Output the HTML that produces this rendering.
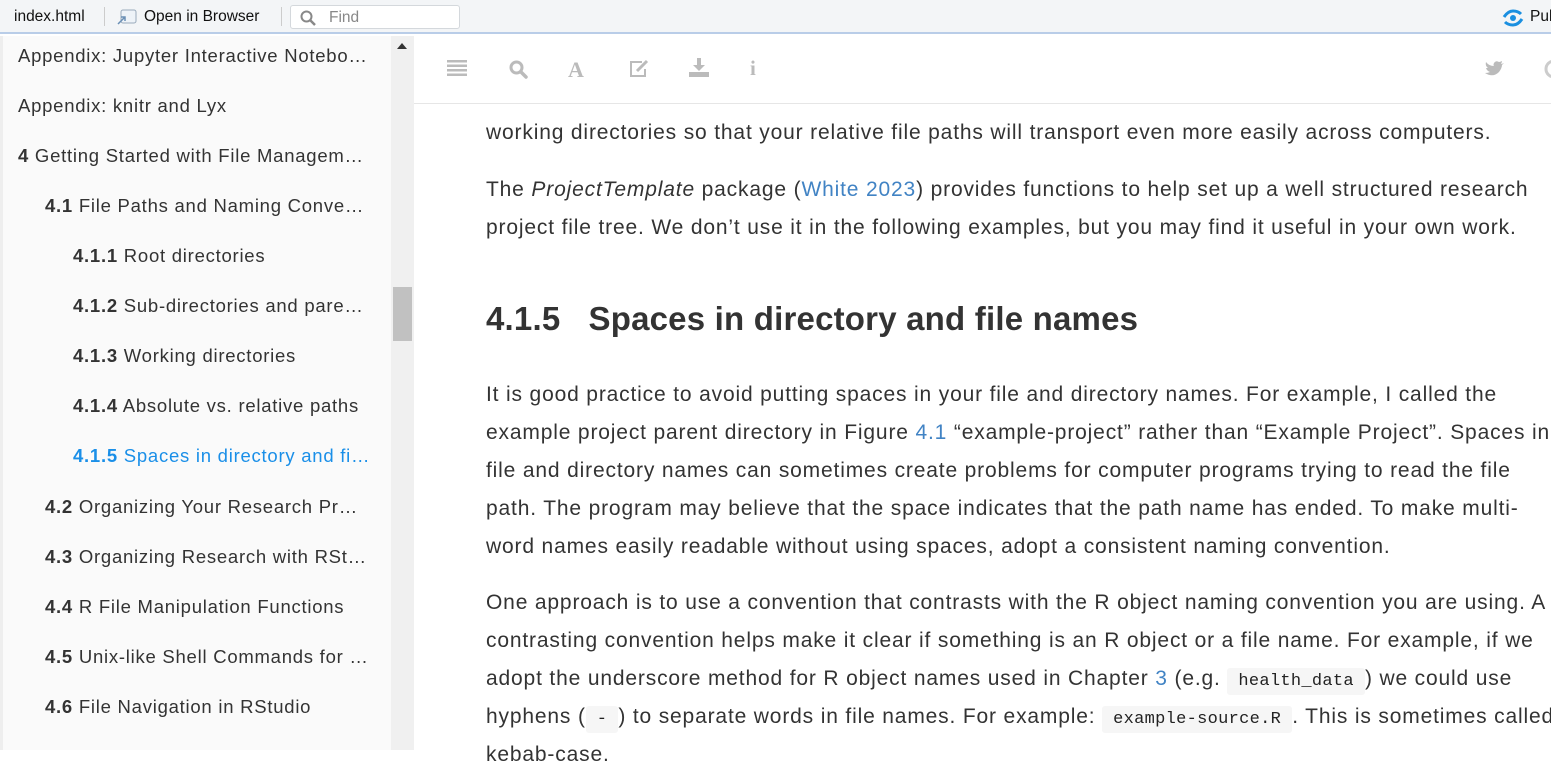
<!DOCTYPE html>
<html><head><meta charset="utf-8"><style>
*{margin:0;padding:0;box-sizing:border-box}
body{width:1551px;height:750px;overflow:hidden;background:#fff;font-family:"Liberation Sans",Arial,sans-serif;position:relative}
#top{position:absolute;left:0;top:0;width:1551px;height:34px;background:#f3f5f7;border-bottom:2px solid #b9cde8;font-size:15.5px;color:#111}
#top span{position:absolute;top:8px}
.sep{position:absolute;top:7px;width:1px;height:19px;background:#ccc}
#find{position:absolute;left:290px;top:5px;width:170px;height:24px;border:1px solid #d4d8dc;border-radius:3px;background:#fff}
#side{position:absolute;left:0;top:36px;width:391px;height:714px;background:#fafafa;border-left:3px solid #eee}
#side div{position:absolute;font-size:18.5px;color:#333;white-space:nowrap;letter-spacing:0.75px}
#side b{font-weight:bold}
#sb{position:absolute;left:391px;top:36px;width:23px;height:714px;background:#f0f0f0}
#thumb{position:absolute;left:393px;top:287px;width:19px;height:54px;background:#c1c1c1}
#tool{position:absolute;left:414px;top:36px;width:1137px;height:68px;border-bottom:1px solid #e6e6e6;background:#fff}
.p{position:absolute;left:486px;font-size:21px;color:#333;white-space:nowrap;letter-spacing:0.84px}
a{color:#4183c4;text-decoration:none}
code{font-family:"Liberation Mono",monospace;font-size:17px;letter-spacing:0.3px;background:#f6f6f6;padding:4px 11px;border-radius:3px;color:#222}
h2{position:absolute;left:486px;top:300px;font-size:33px;letter-spacing:0.2px;font-weight:bold;color:#333;white-space:nowrap}
</style></head><body>
<div id="top">
<span style="left:14px">index.html</span>
<div class="sep" style="left:104px"></div>
<svg style="position:absolute;left:116px;top:9px" width="22" height="17"><rect x="5" y="1" width="15" height="13" rx="2" fill="#eef3f8" stroke="#9ab" /><path d="M2 15 L9 8 M5 8 H9 V12" stroke="#6a8fb5" fill="none" stroke-width="1.5"/></svg>
<span style="left:144px">Open in Browser</span>
<div class="sep" style="left:281px"></div>
<div id="find"><svg style="position:absolute;left:9px;top:4px" width="16" height="16"><circle cx="6.5" cy="6.5" r="5" stroke="#888" stroke-width="2" fill="none"/><path d="M10 10 L15 15" stroke="#888" stroke-width="2.5"/></svg><span style="left:38px;top:3px;color:#888">Find</span></div>
<svg style="position:absolute;left:1502px;top:8px" width="22" height="20"><path d="M2 9 Q6 3 11 3 Q16 3 19 6" stroke="#1a8fe0" stroke-width="3" fill="none"/><path d="M20 11 Q16 17 11 17 Q6 17 3 14" stroke="#1a8fe0" stroke-width="3" fill="none"/><circle cx="11" cy="10" r="3" fill="#1a8fe0"/></svg>
<span style="left:1530px">Pul</span>
</div>
<div id="side">
<div style="left:15px;top:9px">Appendix: Jupyter Interactive Notebo…</div>
<div style="left:15px;top:59px">Appendix: knitr and Lyx</div>
<div style="left:15px;top:109px"><b>4</b> Getting Started with File Managem…</div>
<div style="left:42px;top:159px"><b>4.1</b> File Paths and Naming Conve…</div>
<div style="left:70px;top:209px"><b>4.1.1</b> Root directories</div>
<div style="left:70px;top:259px"><b>4.1.2</b> Sub-directories and pare…</div>
<div style="left:70px;top:309px"><b>4.1.3</b> Working directories</div>
<div style="left:70px;top:359px"><b>4.1.4</b> Absolute vs. relative paths</div>
<div style="left:70px;top:409px;color:#1a8fe8"><b>4.1.5</b> Spaces in directory and fi…</div>
<div style="left:42px;top:460px"><b>4.2</b> Organizing Your Research Pr…</div>
<div style="left:42px;top:510px"><b>4.3</b> Organizing Research with RSt…</div>
<div style="left:42px;top:560px"><b>4.4</b> R File Manipulation Functions</div>
<div style="left:42px;top:610px"><b>4.5</b> Unix-like Shell Commands for …</div>
<div style="left:42px;top:660px"><b>4.6</b> File Navigation in RStudio</div>
</div>
<div id="sb"></div><div id="thumb"></div>
<svg style="position:absolute;left:396px;top:42px" width="12" height="8"><path d="M1 7 L6 1 L11 7Z" fill="#333"/></svg>
<div id="tool">
<svg style="position:absolute;left:33px;top:24px" width="20" height="16" fill="#bbb"><rect y="0" width="20" height="2.5"/><rect y="4.5" width="20" height="2.5"/><rect y="9" width="20" height="2.5"/><rect y="13.5" width="20" height="2.5"/></svg>
<svg style="position:absolute;left:95px;top:24px" width="19" height="19"><circle cx="7.5" cy="7.5" r="5.5" stroke="#bbb" stroke-width="3" fill="none"/><path d="M12 12 L17 17" stroke="#bbb" stroke-width="3.5" stroke-linecap="round"/></svg>
<span style="position:absolute;left:154px;top:21px;font-family:'Liberation Serif',serif;font-weight:bold;font-size:22px;color:#bbb">A</span>
<svg style="position:absolute;left:214px;top:23px" width="22" height="19"><path d="M14 3 H3 V17 H17 V10" stroke="#bbb" stroke-width="2" fill="none"/><path d="M9 12 L19 2" stroke="#bbb" stroke-width="3"/></svg>
<svg style="position:absolute;left:275px;top:22px" width="20" height="20" fill="#bbb"><rect x="8" y="0" width="4" height="8"/><path d="M4 7 H16 L10 13Z"/><rect x="0" y="14" width="20" height="5"/></svg>
<span style="position:absolute;left:336px;top:20px;font-family:'Liberation Serif',serif;font-weight:bold;font-size:21px;color:#bbb">i</span>
<svg style="position:absolute;left:1071px;top:25px" width="20" height="16"><path d="M19 2 Q17 3 16 3 Q17 1 17 0 Q15 1 14 1 Q11 -1 9 2 Q8 4 9 5 Q4 5 1 1 Q0 5 3 7 L1 7 Q2 10 5 11 Q3 12 0 12 Q8 17 14 11 Q17 7 17 4 Q18 3 19 2Z" fill="#bbb"/></svg>
<svg style="position:absolute;left:1130px;top:22px" width="8" height="22"><circle cx="10" cy="11" r="8" stroke="#ccc" stroke-width="3" fill="none"/></svg>
</div>
<div class="p" style="top:121px">working directories so that your relative file paths will transport even more easily across computers.</div>
<div class="p" style="top:178px">The <i>ProjectTemplate</i> package (<a>White 2023</a>) provides functions to help set up a well structured research</div>
<div class="p" style="top:216px">project file tree. We don’t use it in the following examples, but you may find it useful in your own work.</div>
<h2>4.1.5&nbsp;&nbsp; Spaces in directory and file names</h2>
<div class="p" style="top:383px">It is good practice to avoid putting spaces in your file and directory names. For example, I called the</div>
<div class="p" style="top:421px">example project parent directory in Figure <a>4.1</a> “example-project” rather than “Example Project”. Spaces in</div>
<div class="p" style="top:459px">file and directory names can sometimes create problems for computer programs trying to read the file</div>
<div class="p" style="top:497px">path. The program may believe that the space indicates that the path name has ended. To make multi-</div>
<div class="p" style="top:535px">word names easily readable without using spaces, adopt a consistent naming convention.</div>
<div class="p" style="top:591px">One approach is to use a convention that contrasts with the R object naming convention you are using. A</div>
<div class="p" style="top:629px">contrasting convention helps make it clear if something is an R object or a file name. For example, if we</div>
<div class="p" style="top:667px">adopt the underscore method for R object names used in Chapter <a>3</a> (e.g. <code>health_data</code>) we could use</div>
<div class="p" style="top:705px">hyphens (<code>-</code>) to separate words in file names. For example: <code>example-source.R</code>. This is sometimes called</div>
<div class="p" style="top:743px">kebab-case.</div>
</body></html>
